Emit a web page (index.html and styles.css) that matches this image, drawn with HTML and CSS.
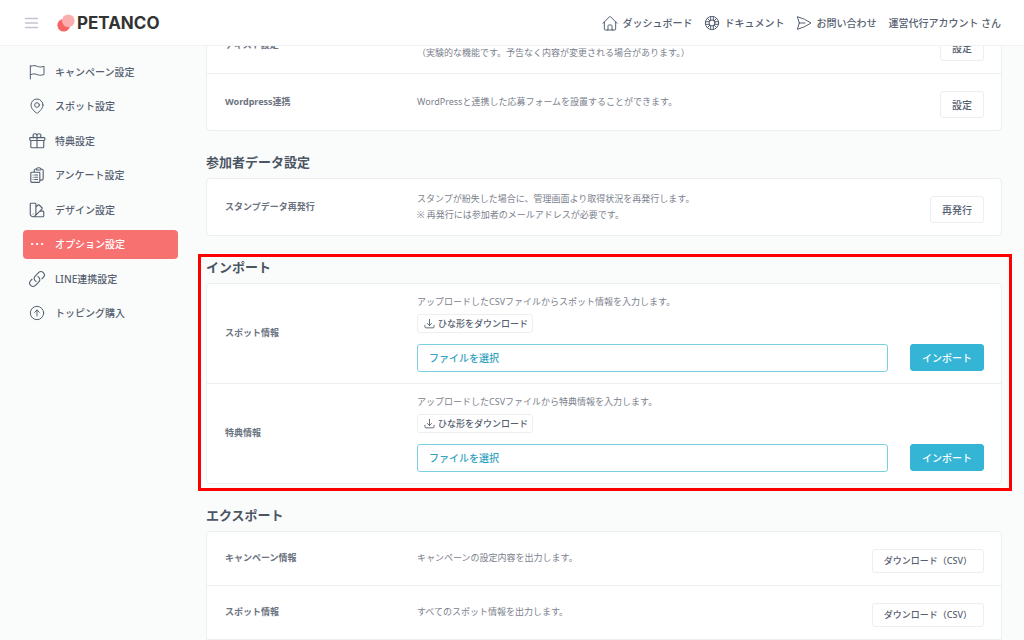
FILE: index.html
```html
<!DOCTYPE html>
<html lang="ja">
<head>
<meta charset="utf-8">
<meta name="viewport" content="width=device-width, initial-scale=1">
<title>オプション設定 | PETANCO</title>
<link rel="stylesheet" href="styles.css">
</head>
<body>
<header class="topbar">
  <button class="menu-button" type="button" aria-label="メニュー">
    <svg class="menu-icon" viewBox="0 0 14 12"><path d="M1 1.5h12M1 6h12M1 10.5h12"/></svg>
  </button>
  <a class="brand" href="#">
    <svg class="brand-mark" viewBox="0 0 18 18"><circle cx="6.7" cy="11.3" r="6.3" fill="#f56565"/><circle cx="11.3" cy="6.7" r="6.3" fill="#fbaeb0"/></svg>
    <span>PETANCO</span>
  </a>
  <nav class="topnav">
    <a class="topnav-link" href="#"><svg class="icon" viewBox="0 0 24 24"><path d="M1.500 12.500l9.704-9.955c.44-.439 1.152-.439 1.591 0L22.500 12.500M3.500 10v11.375c0 .621.504 1.125 1.125 1.125H9v-6.375c0-.621.504-1.125 1.125-1.125h3.750c.621 0 1.125.504 1.125 1.125V22.500h4.375c.621 0 1.125-.504 1.125-1.125V10M8.250 22.500h8.250"/></svg>ダッシュボード</a>
    <a class="topnav-link" href="#"><svg class="icon" viewBox="0 0 24 24"><circle cx="12" cy="12" r="10"/><circle cx="12" cy="12" r="4.5"/><path d="M10 2.3v5.6M14 2.3v5.6M10 16.1v5.6M14 16.1v5.6M2.3 10h5.6M2.3 14h5.6M16.1 10h5.6M16.1 14h5.6M4.9 4.9l3.9 3.9M19.1 4.9l-3.9 3.9M4.9 19.1l3.9-3.9M19.1 19.1l-3.9-3.9"/></svg>ドキュメント</a>
    <a class="topnav-link" href="#"><svg class="icon" viewBox="0 0 24 24"><path d="M5 12L2 2.5A64 64 0 0 1 22.5 12 64 64 0 0 1 2 21.5L5 12zm0 0h8.5"/></svg>お問い合わせ</a>
    <a class="topnav-link" href="#">運営代行アカウント さん</a>
  </nav>
</header>

<div class="layout">
  <aside class="sidebar">
    <nav class="sidenav">
      <a class="sidenav-link" href="#"><svg class="icon" viewBox="0 0 24 24"><path d="M2 2.500v20M2 16l3.500-.900a10 10 0 0 1 7 .800a10 10 0 0 0 6.500.800l3.500-.800V3.500l-3.500.800a10 10 0 0 1-6.500-.800a10 10 0 0 0-7-.800L2 3.500"/></svg>キャンペーン設定</a>
      <a class="sidenav-link" href="#"><svg class="icon" viewBox="0 0 24 24"><circle cx="12" cy="10.500" r="3.500"/><path d="M21 10.500c0 7.142-9 12.500-9 12.500S3 17.642 3 10.500a9 9 0 1118 0z"/></svg>スポット設定</a>
      <a class="sidenav-link" href="#"><svg class="icon icon--large" viewBox="0 0 24 24"><path d="M21 11.25v8.25a1.5 1.5 0 01-1.5 1.5H5.25a1.5 1.5 0 01-1.5-1.5v-8.25M12 4.875A2.625 2.625 0 109.375 7.5H12m0-2.625V7.5m0-2.625A2.625 2.625 0 1114.625 7.5H12m0 0V21m-8.625-9.75h18c.621 0 1.125-.504 1.125-1.125v-1.5c0-.621-.504-1.125-1.125-1.125h-18c-.621 0-1.125.504-1.125 1.125v1.5c0 .621.504 1.125 1.125 1.125z"/></svg>特典設定</a>
      <a class="sidenav-link" href="#"><svg class="icon icon--large" viewBox="0 0 24 24"><path d="M9 12h3.75M9 15h3.75M9 18h3.75m3 .75H18a2.25 2.25 0 002.25-2.25V6.108c0-1.135-.845-2.098-1.976-2.192a48.424 48.424 0 00-1.123-.08m-5.801 0c-.065.21-.1.433-.1.664 0 .414.336.75.75.75h4.5a.75.75 0 00.75-.75 2.25 2.25 0 00-.1-.664m-5.8 0A2.251 2.251 0 0113.5 2.25H15c1.012 0 1.867.668 2.15 1.586m-5.8 0c-.376.023-.75.05-1.124.08C9.095 4.01 8.25 4.973 8.25 6.108V8.25m0 0H4.875c-.621 0-1.125.504-1.125 1.125v11.25c0 .621.504 1.125 1.125 1.125h9.75c.621 0 1.125-.504 1.125-1.125V9.375c0-.621-.504-1.125-1.125-1.125H8.25zM6.75 12h.008v.008H6.75V12zm0 3h.008v.008H6.75V15zm0 3h.008v.008H6.75V18z"/></svg>アンケート設定</a>
      <a class="sidenav-link" href="#"><svg class="icon icon--large" viewBox="0 0 24 24"><path d="M4.098 19.902a3.75 3.75 0 005.304 0l6.401-6.402M6.75 21A3.75 3.75 0 013 17.25V4.125C3 3.504 3.504 3 4.125 3h5.25c.621 0 1.125.504 1.125 1.125v4.072M6.75 21a3.75 3.75 0 003.75-3.75V8.197M6.75 21h13.125c.621 0 1.125-.504 1.125-1.125v-5.25c0-.621-.504-1.125-1.125-1.125h-4.072M10.5 8.197l2.88-2.88c.438-.439 1.15-.439 1.59 0l3.712 3.713c.44.44.44 1.152 0 1.59l-2.879 2.88M6.75 17.25h.008v.008H6.75v-.008z"/></svg>デザイン設定</a>
      <a class="sidenav-link sidenav-link--active" href="#" aria-current="page"><svg class="icon icon--solid" viewBox="0 0 24 24"><circle cx="4.500" cy="12" r="1"/><circle cx="12" cy="12" r="1"/><circle cx="19.500" cy="12" r="1"/></svg>オプション設定</a>
      <a class="sidenav-link" href="#"><svg class="icon icon--large" viewBox="0 0 24 24"><path d="M13.190 8.688a4.500 4.500 0 011.242 7.244l-4.500 4.500a4.500 4.500 0 01-6.364-6.364l1.757-1.757m13.350-.622l1.757-1.757a4.500 4.500 0 00-6.364-6.364l-4.500 4.500a4.500 4.500 0 001.242 7.244"/></svg>LINE連携設定</a>
      <a class="sidenav-link" href="#"><svg class="icon" viewBox="0 0 24 24"><circle cx="12" cy="12" r="10"/><path d="M15.500 11L12 7.500 8.500 11M12 7.500v9"/></svg>トッピング購入</a>
    </nav>
  </aside>

  <main class="content">
    <section class="section">
      <div class="card">
        <div class="row">
          <h3 class="row-label">テキスト設定</h3>
          <p class="row-text row-text--second-line">（実験的な機能です。予告なく内容が変更される場合があります。）</p>
          <div class="row-action"><button class="button" type="button">設定</button></div>
        </div>
        <div class="row">
          <h3 class="row-label">Wordpress連携</h3>
          <p class="row-text">WordPressと連携した応募フォームを設置することができます。</p>
          <div class="row-action"><button class="button" type="button">設定</button></div>
        </div>
      </div>
    </section>

    <section class="section">
      <h2 class="section-title">参加者データ設定</h2>
      <div class="card">
        <div class="row">
          <h3 class="row-label">スタンプデータ再発行</h3>
          <p class="row-text">スタンプが紛失した場合に、管理画面より取得状況を再発行します。<br>※ 再発行には参加者のメールアドレスが必要です。</p>
          <div class="row-action"><button class="button" type="button">再発行</button></div>
        </div>
      </div>
    </section>

    <section class="section section--marked">
      <h2 class="section-title">インポート</h2>
      <div class="card">
        <div class="row row--import">
          <h3 class="row-label">スポット情報</h3>
          <form class="import">
            <p class="row-text">アップロードしたCSVファイルからスポット情報を入力します。</p>
            <button class="button button--template" type="button"><svg class="icon icon--small" viewBox="0 0 24 24"><path d="M2 16v3a2.500 2.500 0 0 0 2.500 2.500h15A2.500 2.500 0 0 0 22 19v-3M16.500 12L12 16.500 7.500 12M12 16.500V3"/></svg>ひな形をダウンロード</button>
            <div class="import-controls">
              <label class="file-picker">ファイルを選択<input class="file-input" type="file" accept=".csv"></label>
              <button class="button button--primary" type="button">インポート</button>
            </div>
          </form>
        </div>
        <div class="row row--import">
          <h3 class="row-label">特典情報</h3>
          <form class="import">
            <p class="row-text">アップロードしたCSVファイルから特典情報を入力します。</p>
            <button class="button button--template" type="button"><svg class="icon icon--small" viewBox="0 0 24 24"><path d="M2 16v3a2.500 2.500 0 0 0 2.500 2.500h15A2.500 2.500 0 0 0 22 19v-3M16.500 12L12 16.500 7.500 12M12 16.500V3"/></svg>ひな形をダウンロード</button>
            <div class="import-controls">
              <label class="file-picker">ファイルを選択<input class="file-input" type="file" accept=".csv"></label>
              <button class="button button--primary" type="button">インポート</button>
            </div>
          </form>
        </div>
      </div>
    </section>

    <section class="section">
      <h2 class="section-title">エクスポート</h2>
      <div class="card card--continued">
        <div class="row">
          <h3 class="row-label">キャンペーン情報</h3>
          <p class="row-text">キャンペーンの設定内容を出力します。</p>
          <div class="row-action"><button class="button button--csv" type="button">ダウンロード（CSV）</button></div>
        </div>
        <div class="row">
          <h3 class="row-label">スポット情報</h3>
          <p class="row-text">すべてのスポット情報を出力します。</p>
          <div class="row-action"><button class="button button--csv" type="button">ダウンロード（CSV）</button></div>
        </div>
      </div>
    </section>
  </main>
</div>
</body>
</html>
```
FILE: styles.css
```css
* {
  box-sizing: border-box;
}

html {
  scrollbar-width: none;
}

body {
  margin: 0;
  background: #fafcfb;
  color: #566070;
  font: 500 10px/16px "Noto Sans", "Noto Sans CJK JP", sans-serif;
}

h2, h3, p {
  margin: 0;
}

a {
  color: inherit;
  text-decoration: none;
}

button {
  font: inherit;
  color: inherit;
  cursor: pointer;
}

.icon {
  width: 16px;
  height: 16px;
  flex: none;
  fill: none;
  stroke: currentColor;
  stroke-width: 1.5;
  stroke-linecap: round;
  stroke-linejoin: round;
}

.icon--solid {
  fill: currentColor;
}

.icon--large {
  width: 18px;
  height: 18px;
  margin: 0 -1px;
}

.icon--small {
  width: 11px;
  height: 11px;
  stroke-width: 2;
}

/* Top bar */

.topbar {
  position: fixed;
  top: 0;
  left: 0;
  right: 0;
  z-index: 10;
  display: flex;
  align-items: center;
  height: 46px;
  padding: 0 23px 0 24px;
  background: #fff;
  border-bottom: 1px solid #f1f3f3;
}

.menu-button {
  display: flex;
  padding: 0;
  border: 0;
  background: none;
}

.menu-icon {
  width: 15px;
  height: 12px;
  fill: none;
  stroke: #c3c6d2;
  stroke-width: 1.5;
  stroke-linecap: round;
}

.brand {
  display: flex;
  align-items: center;
  gap: 2px;
  margin-left: 18px;
  color: #333;
  font: 700 17px/20px Inter, sans-serif;
}

.brand-mark {
  width: 18px;
  height: 18px;
}

.topnav {
  display: flex;
  gap: 12px;
  margin-left: auto;
}

.topnav-link {
  display: flex;
  align-items: center;
  gap: 4px;
  white-space: nowrap;
}

/* Page columns */

.layout {
  display: flex;
}

.sidebar {
  flex: none;
  width: 206px;
  padding: 57px 28px 0 23px;
}

.sidenav {
  position: sticky;
  top: 57px;
  display: flex;
  flex-direction: column;
  justify-content: space-between;
  height: 271px;
}

.sidenav-link {
  display: flex;
  align-items: center;
  gap: 10px;
  height: 29px;
  padding: 0 6px;
  border-radius: 4px;
}

.sidenav-link--active {
  background: #f87171;
  color: #fff;
}

.content {
  flex: 1;
  min-width: 0;
  padding: 16px 22px 0 0;
}

.section-title {
  padding: 21px 0 6px;
  color: #4b5563;
  font-size: 13px;
  font-weight: 600;
  line-height: 20px;
}

/* Setting cards */

.card {
  background: #fff;
  border: 1px solid #eceeef;
  border-radius: 4px;
}

.card--continued {
  border-radius: 4px 4px 0 0;
}

.row {
  display: grid;
  grid-template-columns: 192px 1fr auto;
  align-items: center;
  padding: 11px 17px 12px 18px;
}

.row + .row {
  border-top: 1px solid #eceeef;
}

.row-label {
  color: #6b7280;
  font-size: 9px;
  font-weight: 700;
}

.row-text {
  color: #7b818d;
  font-size: 9px;
  font-weight: 400;
}

.row-text--second-line {
  padding-top: 16px;
}

.row-action {
  padding-top: 6px;
}

.button {
  display: flex;
  align-items: center;
  height: 27px;
  padding: 0 11px;
  background: #fff;
  border: 1px solid #eceeef;
  border-radius: 3px;
  white-space: nowrap;
}

.button--csv {
  height: 24px;
  font-size: 9px;
}

.button--template {
  gap: 3px;
  height: 19px;
  padding: 0 4px 0 6px;
  font-size: 9px;
}

.button--primary {
  background: #34b5d5;
  border-color: #34b5d5;
  color: #fff;
}

/* CSV import */

.row--import {
  grid-template-columns: 192px 1fr;
  padding: 10px 17px 11px 18px;
}

.import {
  display: grid;
  justify-items: start;
  gap: 4px;
}

.import-controls {
  justify-self: stretch;
  display: flex;
  gap: 22px;
  padding-top: 7px;
}

.file-picker {
  flex: 1;
  height: 28px;
  padding: 0 11px;
  border: 1px solid #7bd0e2;
  border-radius: 3px;
  color: #31a3bf;
  line-height: 26px;
  cursor: pointer;
}

.file-input {
  position: absolute;
  width: 1px;
  height: 1px;
  overflow: hidden;
  clip-path: inset(50%);
}

/* Highlight frame drawn around the import section */

.section--marked {
  position: relative;
}

.section--marked::after {
  content: "";
  position: absolute;
  inset: 18px -10px -7px -8px;
  border: 3px solid #f00;
  pointer-events: none;
}
```
